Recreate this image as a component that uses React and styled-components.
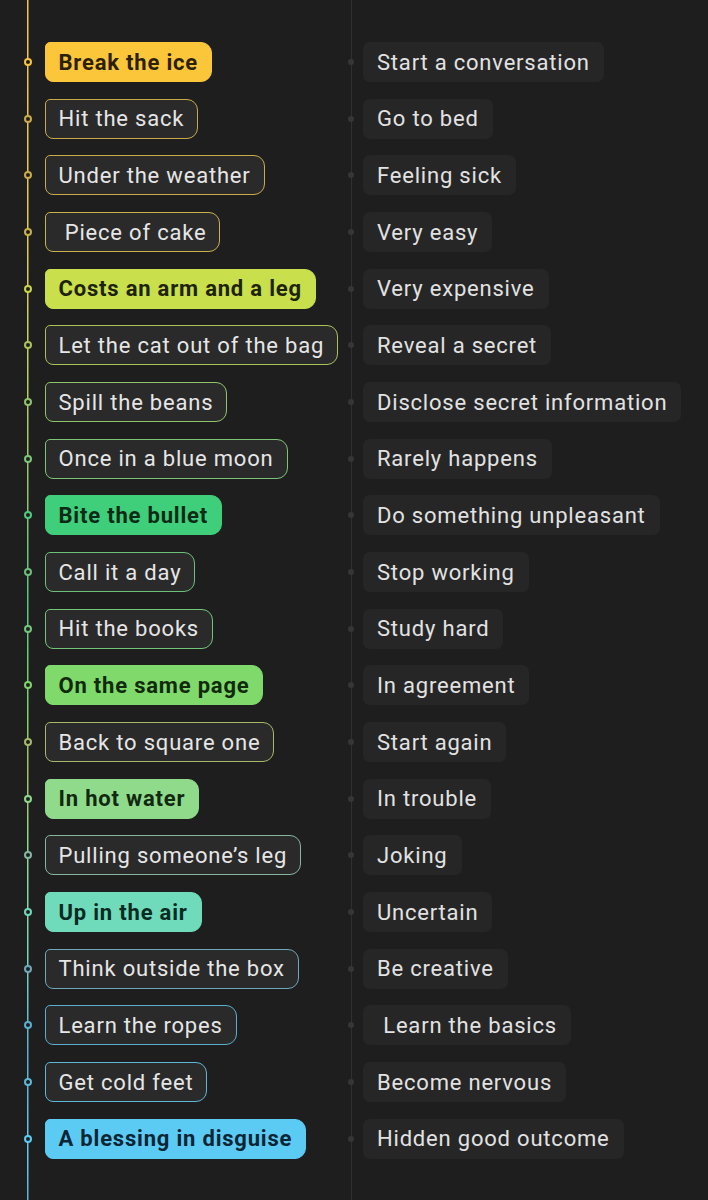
import React from 'react';
import styled, { createGlobalStyle } from 'styled-components';

const GlobalStyle = createGlobalStyle`
  html, body {
    margin: 0;
    padding: 0;
    background: #1e1e1e;
  }
  body {
    font-family: Roboto, 'Noto Sans', sans-serif;
  }
`;

const idioms = [
  { phrase: 'Break the ice', meaning: 'Start a conversation', tint: '#f7c53c', fill: '#fcc63a', ink: '#2b1f06' },
  { phrase: 'Hit the sack', meaning: 'Go to bed', tint: '#c9a948' },
  { phrase: 'Under the weather', meaning: 'Feeling sick', tint: '#c9ab4a' },
  { phrase: ' Piece of cake', meaning: 'Very easy', tint: '#c8b24c' },
  { phrase: 'Costs an arm and a leg', meaning: 'Very expensive', tint: '#c6d44a', fill: '#c9df4c', ink: '#1d2306' },
  { phrase: 'Let the cat out of the bag', meaning: 'Reveal a secret', tint: '#a9c25a' },
  { phrase: 'Spill the beans', meaning: 'Disclose secret information', tint: '#8fc46a' },
  { phrase: 'Once in a blue moon', meaning: 'Rarely happens', tint: '#7cc476' },
  { phrase: 'Bite the bullet', meaning: 'Do something unpleasant', tint: '#4ecb7c', fill: '#3fcf7b', ink: '#0b2a15' },
  { phrase: 'Call it a day', meaning: 'Stop working', tint: '#6cc07a' },
  { phrase: 'Hit the books', meaning: 'Study hard', tint: '#72c67a' },
  { phrase: 'On the same page', meaning: 'In agreement', tint: '#7ed36a', fill: '#7fd96b', ink: '#112a0b' },
  { phrase: 'Back to square one', meaning: 'Start again', tint: '#a6b86a' },
  { phrase: 'In hot water', meaning: 'In trouble', tint: '#8fd88a', fill: '#8fdb8b', ink: '#12290f' },
  { phrase: 'Pulling someone’s leg', meaning: 'Joking', tint: '#86b6a0' },
  { phrase: 'Up in the air', meaning: 'Uncertain', tint: '#6fd8bb', fill: '#6fdbba', ink: '#0b2a22' },
  { phrase: 'Think outside the box', meaning: 'Be creative', tint: '#6fa8b8' },
  { phrase: 'Learn the ropes', meaning: ' Learn the basics', tint: '#5aaed0' },
  { phrase: 'Get cold feet', meaning: 'Become nervous', tint: '#5fb6d8' },
  { phrase: 'A blessing in disguise', meaning: 'Hidden good outcome', tint: '#5ccbf3', fill: '#5ccbf4', ink: '#0b2535' },
];

const Board = styled.div`
  display: flex;
  min-height: 1200px;
`;

const Column = styled.div`
  display: flex;
  flex-direction: column;
  gap: 16.68px;
  padding: 42px 0 0 ${p => p.$inset}px;
  background-repeat: no-repeat;
  background-position: ${p => p.$line}px 0;
  background-size: ${p => p.$lineWidth}px 100%;
`;

const PhraseColumn = styled(Column)`
  width: 324px;
  box-sizing: border-box;
  background-image: linear-gradient(
    to bottom,
    #f5c53c 0%,
    #e8c844 18%,
    #c6d44a 28%,
    #7cc476 44%,
    #4ecb7c 50%,
    #7ed36a 60%,
    #9fbf66 64%,
    #8fd88a 70%,
    #6fd8bb 80%,
    #5aaed0 88%,
    #5ccbf3 96%,
    #5ab4dc 100%
  );
`;

const MeaningColumn = styled(Column)`
  flex: 1;
  background-image: linear-gradient(#303030, #303030);
`;

const Row = styled.div`
  display: flex;
  align-items: center;
  height: 40px;
`;

const Knot = styled.span`
  width: 8px;
  height: 8px;
  box-sizing: border-box;
  border-radius: 50%;
  border: 2px solid ${p => p.$tint};
  background: #1e1e1e;
  margin: 0 13px 0 -0.5px;
  flex-shrink: 0;
`;

const GreyKnot = styled.span`
  width: 6px;
  height: 6px;
  border-radius: 50%;
  background: #363636;
  margin-right: 9px;
  flex-shrink: 0;
`;

const Phrase = styled.div`
  height: 40px;
  box-sizing: border-box;
  display: flex;
  align-items: center;
  padding: 0 13px;
  border-radius: 5px 11px 11px 8px;
  font-size: 22px;
  letter-spacing: 0.8px;
  white-space: pre;
  background: ${p => (p.$fill ? p.$fill : '#2a2a2a')};
  border: 1px solid ${p => (p.$fill ? p.$fill : p.$tint)};
  color: ${p => (p.$fill ? p.$ink : '#e6e6e6')};
  font-weight: ${p => (p.$fill ? 700 : 400)};
`;

const Meaning = styled.div`
  height: 40px;
  box-sizing: border-box;
  display: flex;
  align-items: center;
  padding: 0 14px;
  border-radius: 7px;
  background: #262626;
  color: #e2e2e2;
  font-size: 22px;
  letter-spacing: 0.8px;
  white-space: pre;
`;

export default function App() {
  return (
    <>
      <GlobalStyle />
      <Board>
        <PhraseColumn $inset={24} $line={26.5} $lineWidth={1.5}>
          {idioms.map(({ phrase, tint, fill, ink }) => (
            <Row key={phrase}>
              <Knot $tint={tint} />
              <Phrase $tint={tint} $fill={fill} $ink={ink}>
                {phrase}
              </Phrase>
            </Row>
          ))}
        </PhraseColumn>
        <MeaningColumn $inset={24} $line={26.5} $lineWidth={1}>
          {idioms.map(({ phrase, meaning }) => (
            <Row key={phrase}>
              <GreyKnot />
              <Meaning>{meaning}</Meaning>
            </Row>
          ))}
        </MeaningColumn>
      </Board>
    </>
  );
}
